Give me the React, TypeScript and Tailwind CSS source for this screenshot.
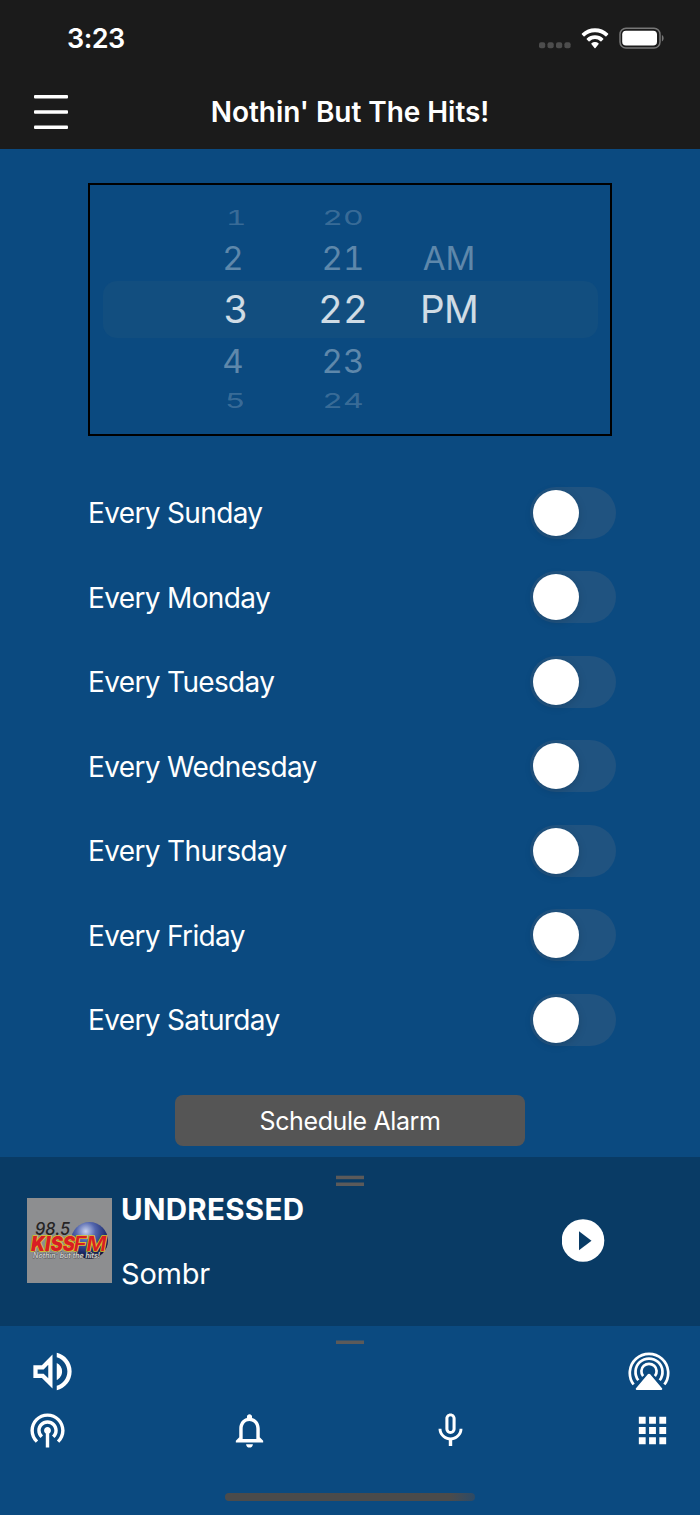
import React, { useState } from 'react';
import { clsx } from 'clsx';
import {
  MdApps,
  MdMicNone,
  MdNotificationsNone,
  MdOutlineVolumeUp,
  MdPodcasts,
} from 'react-icons/md';

interface WheelItem {
  label: string;
  className?: string;
}

const DAYS = ['Sunday', 'Monday', 'Tuesday', 'Wednesday', 'Thursday', 'Friday', 'Saturday'];

const HOURS: WheelItem[] = [
  { label: '1', className: 'translate-x-px' },
  { label: '2', className: '-translate-x-[2px]' },
  { label: '3', className: 'translate-x-px' },
  { label: '4', className: '-translate-x-[2px]' },
  { label: '5' },
];

const MINUTES: WheelItem[] = [
  { label: '20' },
  { label: '21' },
  { label: '22' },
  { label: '23' },
  { label: '24' },
];

const PERIODS: WheelItem[] = [
  { label: '' },
  { label: 'AM' },
  { label: 'PM', className: 'tracking-[-0.8px]' },
  { label: '' },
  { label: '' },
];

// Rows get flatter and dimmer away from the selected one
const ROW_STYLES = [
  'h-[34px] text-[32px] text-white/20 scale-y-[0.64]',
  'h-[46px] text-[33px] text-white/35 scale-y-[0.97]',
  'h-[57px] text-[38.5px] text-white/80',
  'h-[46px] text-[33px] text-white/35 scale-y-[0.97]',
  'h-[34px] text-[32px] text-white/20 scale-y-[0.64]',
];

const StatusBar = () => (
  <div className="flex h-[77px] items-center justify-between pl-[67px] pr-[35px]">
    <span className="text-[27px] font-semibold leading-none tracking-[-0.5px]">3:23</span>
    <div className="flex items-center">
      <svg width="32" height="24" viewBox="0 0 32 24" fill="#4d4d4d">
        <rect x="0" y="15.300" width="6.200" height="6" rx="2" />
        <rect x="8.500" y="15.300" width="6.200" height="6" rx="2" />
        <rect x="17" y="15.300" width="6.200" height="6" rx="2" />
        <rect x="25.400" y="15.300" width="6.200" height="6" rx="2" />
      </svg>
      <svg className="ml-[10px]" width="28" height="24" viewBox="0 0 28 24" fill="#fff">
        <path d="M14 1.300c5 0 9.600 1.900 13.100 5.200.3.300.3.700 0 1l-1.700 1.700c-.3.300-.7.300-1 0A15.200 15.200 0 0 0 14 5.300 15.200 15.200 0 0 0 3.600 9.200c-.3.300-.7.300-1 0L.9 7.500c-.3-.3-.3-.7 0-1A19 19 0 0 1 14 1.300z" />
        <path d="M14 8.300c3.100 0 6 1.200 8.200 3.200.3.300.3.700 0 1l-1.800 1.700c-.3.300-.7.300-1 0a8 8 0 0 0-10.800 0c-.3.300-.7.300-1 0l-1.800-1.700c-.3-.3-.3-.7 0-1A12 12 0 0 1 14 8.300z" />
        <path d="M14 15.100c1.300 0 2.500.4 3.500 1.200.3.300.3.700 0 1l-3 3.800c-.3.300-.7.300-1 0l-3-3.800c-.3-.3-.3-.7 0-1a5.500 5.500 0 0 1 3.500-1.200z" />
      </svg>
      <svg className="ml-[10px]" width="46" height="24" viewBox="0 0 46 24" fill="none">
        <rect x="1" y="1.200" width="40" height="19.800" rx="6" stroke="#777" strokeWidth="1.500" />
        <rect x="3.200" y="3.700" width="34.800" height="14.800" rx="3.800" fill="#fff" />
        <path d="M42.900 8v6.400c2.300-1 2.300-5.400 0-6.400z" fill="#777" />
      </svg>
    </div>
  </div>
);

const Header = () => (
  <div className="flex h-[70px] items-center pl-[34px] pr-[68px]">
    <button className="-mt-px" aria-label="Menu">
      <svg width="34" height="36" viewBox="0 0 34 36" fill="#fff">
        <rect y="1" width="34" height="3.400" rx="1" />
        <rect y="16.300" width="34" height="3.400" rx="1" />
        <rect y="31.600" width="34" height="3.400" rx="1" />
      </svg>
    </button>
    <h1 className="flex-1 text-center text-[28px] font-semibold leading-none tracking-[-0.05px]">
      Nothin' But The Hits!
    </h1>
  </div>
);

const Wheel = ({ items, width }: { items: WheelItem[]; width: string }) => (
  <div className={clsx('flex flex-col items-center', width)}>
    {items.map((item, i) => (
      <div key={i} className={clsx('flex items-center leading-none', ROW_STYLES[i])}>
        <span className={item.className}>{item.label}</span>
      </div>
    ))}
  </div>
);

const TimePicker = () => (
  <div className="relative mx-auto mt-[34px] h-[253px] w-[524px] border-2 border-black pt-[16px]">
    <div className="absolute left-[13px] top-[96px] h-[57px] w-[495px] rounded-[14px] bg-[#124e7f]" />
    <div className="relative flex pl-[95px] tabular-nums">
      <Wheel items={HOURS} width="w-[100px]" />
      <Wheel items={MINUTES} width="w-[116px]" />
      <Wheel items={PERIODS} width="w-[96px]" />
    </div>
  </div>
);

const DayRow = ({ day }: { day: string }) => {
  const [on, setOn] = useState(false);

  return (
    <div className="flex h-[84.5px] items-center justify-between">
      <span className="pt-px text-[28px] leading-none tracking-[-0.65px]">Every {day}</span>
      <button
        role="switch"
        aria-checked={on}
        aria-label={`Every ${day}`}
        onClick={() => setOn(!on)}
        className={clsx(
          'flex h-[52px] w-[86px] items-center rounded-full px-[3px]',
          on ? 'justify-end bg-green-500' : 'bg-[#205380]'
        )}
      >
        <span className="size-[46px] rounded-full bg-white shadow-[0_2px_8px_rgba(0,0,0,0.15)]" />
      </button>
    </div>
  );
};

const StationLogo = () => (
  <svg className="shrink-0" width="85" height="85" viewBox="0 0 85 85">
    <defs>
      <radialGradient id="globe" cx="0.4" cy="0.25" r="0.75">
        <stop offset="0" stopColor="#c9d2ee" />
        <stop offset="0.35" stopColor="#5265ad" />
        <stop offset="0.75" stopColor="#1d2b6c" />
        <stop offset="1" stopColor="#0c1238" />
      </radialGradient>
    </defs>
    <rect width="85" height="85" fill="#8d8e90" />
    <circle cx="62.500" cy="42.500" r="18.500" fill="url(#globe)" />
    <g fontFamily="Inter, sans-serif">
      <text x="8" y="37" fontSize="17" fontStyle="italic" fontWeight="500" textLength="35" lengthAdjust="spacingAndGlyphs" fill="#262424">
        98.5
      </text>
      <g fontStyle="italic" fill="#d91d24" stroke="#d9c22b" strokeWidth="1.600" paintOrder="stroke">
        <text x="4" y="52.500" fontSize="19.500" fontWeight="900" textLength="44" lengthAdjust="spacingAndGlyphs">
          KISS
        </text>
        <text x="46.500" y="52.500" fontSize="19.500" fontWeight="600" textLength="33" lengthAdjust="spacingAndGlyphs">
          FM
        </text>
      </g>
      <text x="6" y="60" fontSize="7" fontStyle="italic" fontWeight="500" textLength="67" lengthAdjust="spacingAndGlyphs" fill="#d5d5d5" stroke="#555" strokeWidth="0.800" paintOrder="stroke">
        Nothin' but the hits!
      </text>
    </g>
  </svg>
);

const Player = () => (
  <div className="flex h-[169px] flex-col bg-[#093b65]">
    <svg className="mx-auto mt-[18px]" width="28" height="11" viewBox="0 0 28 11" fill="#5b5a5a">
      <rect y="0.700" width="28" height="3.500" />
      <rect y="7.500" width="28" height="3.500" />
    </svg>
    <div className="mt-[12px] flex h-[85px] pl-[27px] pr-[95px]">
      <StationLogo />
      <div className="ml-[9px] flex-1 whitespace-nowrap">
        <div className="-mt-[3px] text-[29.5px] font-bold leading-[29px] tracking-[0.3px]">UNDRESSED</div>
        <div className="mt-[35px] text-[29px] leading-[29px] tracking-[-0.2px]">Sombr</div>
      </div>
      <button aria-label="Play" className="self-center">
        <svg width="43" height="43" viewBox="0 0 43 43">
          <circle cx="21" cy="21.500" r="21.300" fill="#fff" />
          <path d="M17 12.200v19L29.500 21.700z" fill="#093b65" />
        </svg>
      </button>
    </div>
  </div>
);

const AirplayIcon = () => (
  <svg className="mb-[2px]" width="42" height="42" viewBox="0 0 42 42" fill="none" stroke="#fff" strokeWidth="2.700">
    <path d="M5.600 34.500A19.200 19.200 0 1 1 36.400 34.500" />
    <path d="M10.300 30.300A13.500 13.500 0 1 1 31.700 30.300" />
    <path d="M15.100 26.200A7.600 7.600 0 1 1 26.900 26.200" />
    <path d="M21 23.800c.5 0 .9.200 1.200.5L34 38.300c.6.700.2 1.700-.7 1.700H8.700c-.9 0-1.300-1-.7-1.700l11.800-14c.3-.3.700-.5 1.200-.5z" fill="#fff" stroke="none" />
  </svg>
);

const BottomBar = () => (
  <div className="flex h-[189px] flex-col">
    <svg className="mx-auto mt-[14px]" width="28" height="4" viewBox="0 0 28 4" fill="#5b5a5a">
      <rect y="0.500" width="28" height="3.500" />
    </svg>
    <div className="flex h-[55px] items-center justify-between pl-[27px] pr-[30px]">
      <MdOutlineVolumeUp size={51} />
      <AirplayIcon />
    </div>
    <div className="mt-[11px] flex justify-between px-[27px]">
      <MdPodcasts size={41} />
      <MdNotificationsNone size={41} />
      <MdMicNone size={41} />
      <MdApps size={41} />
    </div>
    <div className="mx-auto mb-[14px] mt-auto h-[8px] w-[250px] rounded-full bg-linear-to-r from-[#4b4b4b] from-90% to-[#2c4a66]" />
  </div>
);

const App: React.FC = () => (
  <div className="flex h-[1515px] w-[700px] flex-col overflow-hidden bg-[#0b4a80] font-['Inter',sans-serif] text-white">
    <div className="h-[149px] shrink-0 bg-[#1b1b1b]">
      <StatusBar />
      <Header />
    </div>
    <main className="flex flex-1 flex-col">
      <TimePicker />
      <div className="mt-[34.5px] pl-[88px] pr-[84px]">
        {DAYS.map((day) => (
          <DayRow key={day} day={day} />
        ))}
      </div>
      <button className="mx-auto mt-[33px] h-[51px] w-[350px] rounded-[8px] bg-[#555] pt-px text-[25px] leading-none tracking-[-0.4px]">
        Schedule Alarm
      </button>
    </main>
    <Player />
    <BottomBar />
  </div>
);

export default App;
